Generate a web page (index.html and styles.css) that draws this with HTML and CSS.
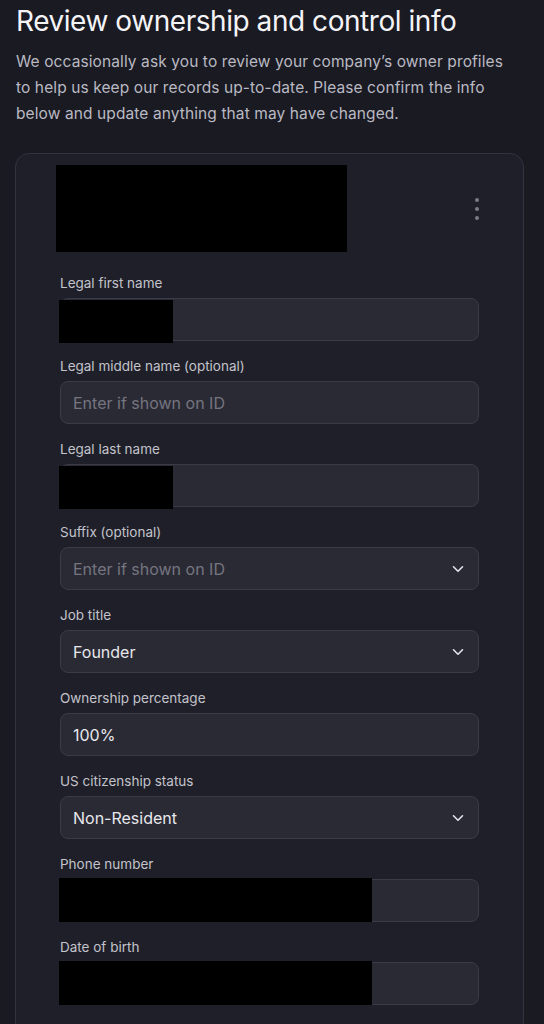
FILE: index.html
```html
<!DOCTYPE html>
<html lang="en">
<head>
<meta charset="utf-8">
<title>Review ownership and control info</title>
<link rel="stylesheet" href="styles.css">
</head>
<body>
<main class="page">
  <h1 class="title">Review ownership and control info</h1>
  <p class="intro">We occasionally ask you to review your company’s owner profiles to help us keep our records up-to-date. Please confirm the info below and update anything that may have changed.</p>

  <section class="card">
    <div class="card-head">
      <div class="redact redact-head"></div>
      <button class="kebab" aria-label="More options">
        <span></span><span></span><span></span>
      </button>
    </div>

    <div class="fields">
      <div class="field">
        <label class="label">Legal first name</label>
        <div class="input"><span class="redact redact-short"></span></div>
      </div>
      <div class="field">
        <label class="label">Legal middle name (optional)</label>
        <div class="input"><span class="placeholder">Enter if shown on ID</span></div>
      </div>
      <div class="field">
        <label class="label">Legal last name</label>
        <div class="input"><span class="redact redact-short"></span></div>
      </div>
      <div class="field">
        <label class="label">Suffix (optional)</label>
        <div class="input select"><span class="placeholder">Enter if shown on ID</span>
          <svg class="chev" width="12" height="8" viewBox="0 0 12 8"><path d="M1.5 1.75 6 6.25l4.5-4.5" fill="none" stroke="#e4e4ea" stroke-width="1.6" stroke-linecap="round" stroke-linejoin="round"/></svg>
        </div>
      </div>
      <div class="field">
        <label class="label">Job title</label>
        <div class="input select"><span class="value">Founder</span>
          <svg class="chev" width="12" height="8" viewBox="0 0 12 8"><path d="M1.5 1.75 6 6.25l4.5-4.5" fill="none" stroke="#e4e4ea" stroke-width="1.6" stroke-linecap="round" stroke-linejoin="round"/></svg>
        </div>
      </div>
      <div class="field">
        <label class="label">Ownership percentage</label>
        <div class="input"><span class="value">100%</span></div>
      </div>
      <div class="field">
        <label class="label">US citizenship status</label>
        <div class="input select"><span class="value">Non-Resident</span>
          <svg class="chev" width="12" height="8" viewBox="0 0 12 8"><path d="M1.5 1.75 6 6.25l4.5-4.5" fill="none" stroke="#e4e4ea" stroke-width="1.6" stroke-linecap="round" stroke-linejoin="round"/></svg>
        </div>
      </div>
      <div class="field">
        <label class="label">Phone number</label>
        <div class="input"><span class="redact redact-long"></span></div>
      </div>
      <div class="field">
        <label class="label">Date of birth</label>
        <div class="input"><span class="redact redact-long"></span></div>
      </div>
    </div>
  </section>
</main>
</body>
</html>
```

FILE: styles.css
```css
* { box-sizing: border-box; }

html, body {
  margin: 0;
  background: #1a1a23;
}

body {
  font-family: Inter, "Noto Sans", "Liberation Sans", sans-serif;
  color: #f2f2f5;
}

.page {
  padding: 0 16px 40px 16px;
}

.title {
  margin: 0;
  padding-top: 3px;
  font-size: 28px;
  line-height: 36px;
  font-weight: 400;
  letter-spacing: -0.45px;
  color: #f4f4f7;
}

.intro {
  margin: 10px 0 0 0;
  max-width: 496px;
  font-size: 15.5px;
  line-height: 26px;
  letter-spacing: 0.1px;
  color: #b9b9c2;
}

.card {
  margin-top: 26px;
  margin-left: -1px;
  margin-right: 4px;
  background: #1f1f29;
  border: 1px solid #33333f;
  border-radius: 14px;
  padding: 11px 44px 30px 44px;
}

.card-head {
  display: flex;
  align-items: center;
  justify-content: space-between;
}

.redact {
  display: block;
  background: #000;
}

.redact-head {
  width: 291px;
  height: 87px;
  margin-left: -4px;
}

.kebab {
  display: flex;
  flex-direction: column;
  gap: 5px;
  background: none;
  border: 0;
  padding: 0;
  margin-right: 0;
  width: 4px;
}

.kebab span {
  width: 4px;
  height: 4px;
  border-radius: 50%;
  background: #7a7a88;
}

.fields {
  margin-top: 21px;
  display: flex;
  flex-direction: column;
  gap: 15px;
}

.field {
  display: flex;
  flex-direction: column;
  gap: 5px;
}

.label {
  font-size: 13.5px;
  line-height: 20px;
  color: #c3c3cb;
}

.input {
  height: 43px;
  display: flex;
  align-items: center;
  background: #2a2a35;
  border: 1px solid #3b3b47;
  border-radius: 8px;
  padding: 0 14px 0 12px;
  font-size: 16px;
}

.placeholder {
  color: #75757f;
}

.value {
  color: #e8e8ec;
}

.select {
  justify-content: space-between;
}

.chev {
  display: block;
  margin-top: 1px;
}

.redact-short {
  width: 114px;
  align-self: stretch;
  margin: 1px 0 -3px -14px;
}

.redact-long {
  width: 313px;
  align-self: stretch;
  margin: -2px 0 -1px -14px;
}
```
